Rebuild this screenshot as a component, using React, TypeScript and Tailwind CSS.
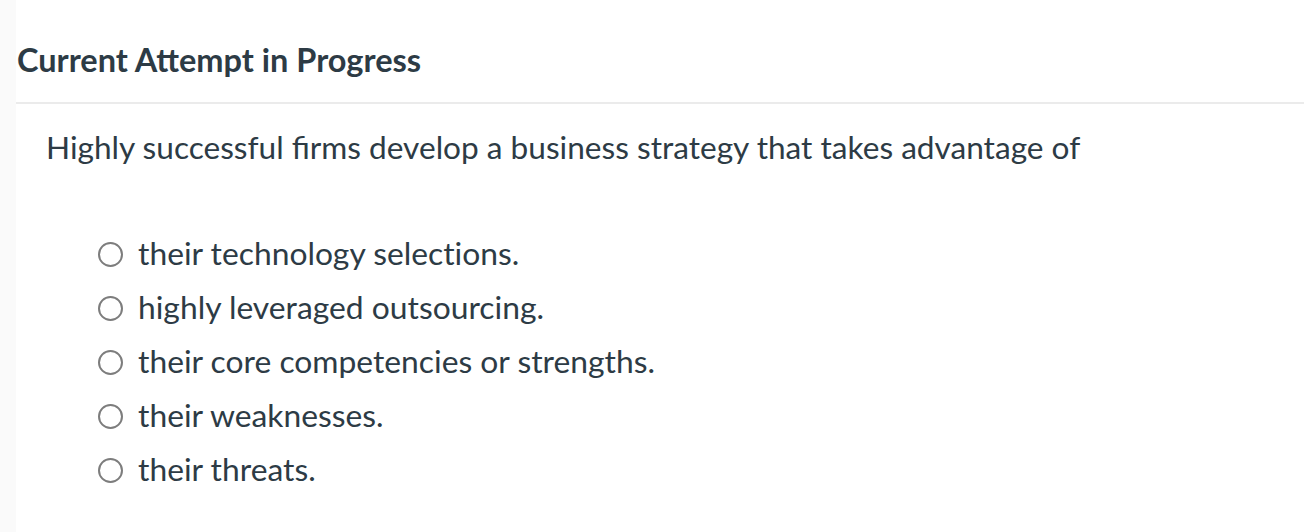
const options = [
  "their technology selections.",
  "highly leveraged outsourcing.",
  "their core competencies or strengths.",
  "their weaknesses.",
  "their threats.",
]

export default function App() {
  return (
    <div className="flex h-[532px] w-[1304px] bg-white text-[#2d3b45] font-['Lato','Noto_Sans',sans-serif]">
      <div className="w-4 shrink-0 bg-[#fafafa]" />
      <div className="flex flex-1 flex-col">
        <div className="flex h-[104px] items-center border-b-2 border-[#ebebeb] pl-px pt-[18px]">
          <h1 className="text-[32.5px] font-bold leading-none">Current Attempt in Progress</h1>
        </div>
        <div className="px-[30px] pt-[25px]">
          <p className="text-[31.6px] leading-[36px]">
            Highly successful firms develop a business strategy that takes advantage of
          </p>
          <ul className="mt-[62px] flex flex-col pl-[52px]">
            {options.map((o) => (
              <li key={o} className="flex h-[54px] items-center gap-[15px]">
                <span className="h-[25px] w-[25px] shrink-0 rounded-full border-2 border-[#7d7d7d]" />
                <span className="text-[31.8px] leading-none [font-variant-ligatures:none]">{o}</span>
              </li>
            ))}
          </ul>
        </div>
      </div>
    </div>
  )
}
